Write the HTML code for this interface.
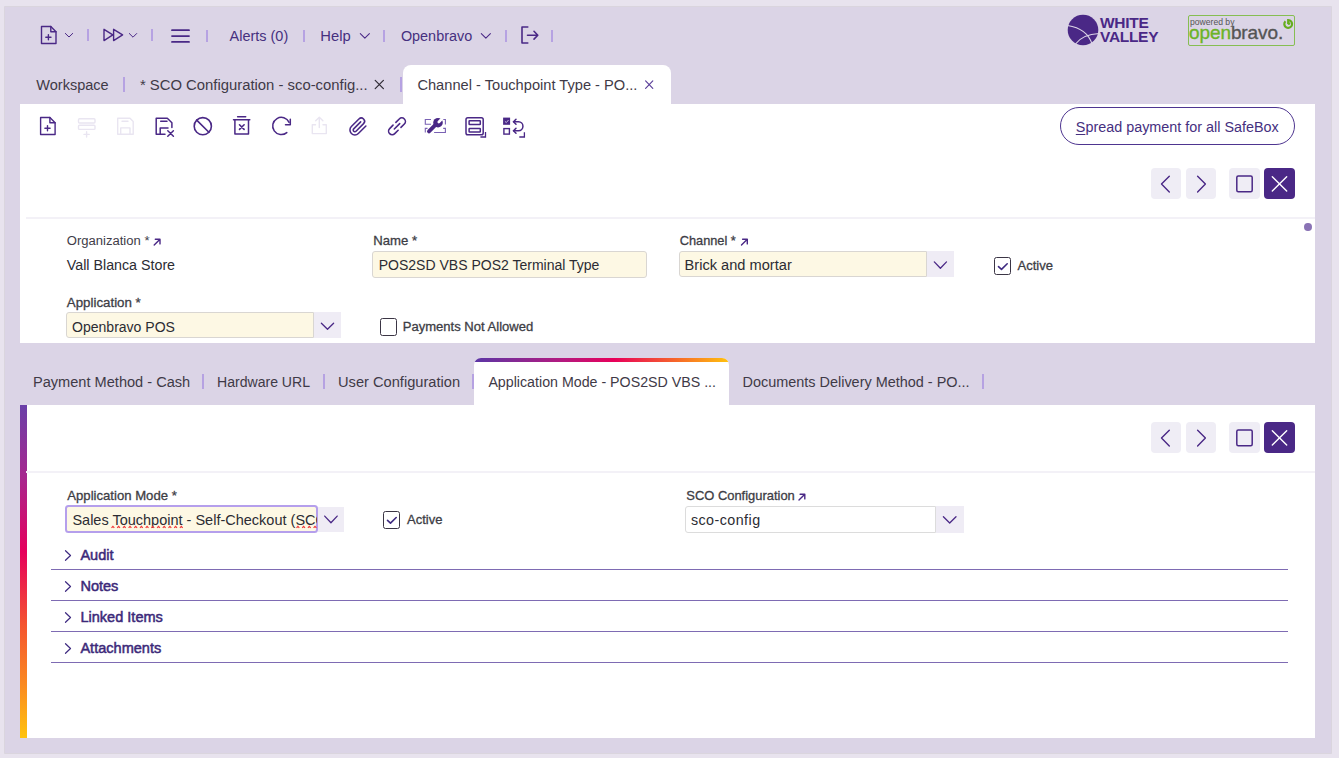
<!DOCTYPE html>
<html><head><meta charset="utf-8">
<style>
*{box-sizing:border-box;margin:0;padding:0}
html,body{width:1339px;height:758px;overflow:hidden;background:#e8e3ee;font-family:"Liberation Sans",sans-serif;position:relative}
.a{position:absolute}
.t{position:absolute;white-space:nowrap;line-height:1}
#main{left:4.5px;top:7.3px;width:1326px;height:745.5px;background:#dbd4e6;box-shadow:0 0 0 .8px #d6d2da}
.nav{color:#46307f;font-size:14.4px}
.sep{position:absolute;width:2.2px;height:11.6px;background:#b6a2e2}
.tab{color:#3f3a47;font-size:14.5px}
.tsep{position:absolute;width:2.2px;height:15.3px;background:#b6a2e2}
#panel{left:20px;top:104px;width:1295px;height:634px;background:#fff}
.lbl{color:#3d3d45;font-size:12.9px;-webkit-text-stroke:.3px #3d3d45}
.val{color:#2c2c33;font-size:14.3px}
.inp{position:absolute;background:#fdf8e4;border:1px solid #d9d6d2;border-radius:3px}
.dd{position:absolute;background:#efecf5}
.nb{position:absolute;width:30.5px;height:30.7px;border-radius:4px;background:#efedf5}
.sec{color:#3c2979;font-size:14.5px;-webkit-text-stroke:.5px #3c2979}
.hl{position:absolute;left:51px;width:1237px;height:1.5px;background:#7e6bb3}
#ov{position:absolute;left:0;top:0;overflow:visible}
</style></head><body>
<div id="main" class="a"></div>
<div class="sep" style="left:87.3px;top:29.2px;height:11.6px"></div>
<div class="sep" style="left:151.3px;top:29.2px;height:11.6px"></div>
<div class="sep" style="left:206px;top:30px;height:11.7px"></div>
<div class="sep" style="left:302.5px;top:30px;height:11.7px"></div>
<div class="sep" style="left:383.1px;top:30px;height:11.7px"></div>
<div class="sep" style="left:504.5px;top:30px;height:11.7px"></div>
<div class="sep" style="left:551px;top:30px;height:11.7px"></div>
<div class="t nav" style="left:229.6px;top:28.96px;font-size:14.46px;">Alerts (0)</div>
<div class="t nav" style="left:320.3px;top:28.71px;font-size:14.76px;">Help</div>
<div class="t nav" style="left:400.9px;top:28.99px;font-size:14.42px;">Openbravo</div>
<div class="t" style="left:1100px;top:16px;font-size:15.5px;font-weight:700;color:#4a2886;letter-spacing:-.3px;line-height:14px">WHITE<br>VALLEY</div>
<div class="a" style="left:1188.2px;top:15px;width:107.3px;height:30.8px;border:1.2px solid #86be52;border-radius:2px"></div>
<div class="t" style="left:1190px;top:17.6px;font-size:8.6px;color:#555">powered by</div>
<div class="t" style="left:1189px;top:23.4px;font-size:19px;color:#6cb327;letter-spacing:-.1px;-webkit-text-stroke:.35px #6cb327">open<span style="color:#555;-webkit-text-stroke:.35px #555">bravo.</span></div>
<div class="t tab" style="left:36.3px;top:77.81px;font-size:14.52px;">Workspace</div>
<div class="tsep" style="left:123px;top:77px"></div>
<div class="t tab" style="left:139.9px;top:77.53px;font-size:14.85px;">* SCO Configuration - sco-config...</div>
<div class="tsep" style="left:400px;top:77px"></div>
<div class="a" style="left:403px;top:65px;width:268px;height:40px;background:#fff;border-radius:8px 8px 0 0"></div>
<div class="t tab" style="left:417.4px;top:77.7px;font-size:14.65px;">Channel - Touchpoint Type - PO...</div>
<div id="panel" class="a"></div>
<div class="a" style="left:1060px;top:107px;width:235px;height:38px;border:1px solid #4e3590;border-radius:19px"></div>
<div class="t nav" style="left:1075.8px;top:119.83px;font-size:14.38px;"><u style="text-decoration-thickness:1px;text-underline-offset:2px">S</u>pread payment for all SafeBox</div>
<div class="nb" style="left:1150.8px;top:168.1px"></div>
<div class="nb" style="left:1185.8px;top:168.1px"></div>
<div class="nb" style="left:1229.3px;top:168.1px"></div>
<div class="nb" style="left:1264.3px;top:168.1px;background:#4a2886"></div>
<div class="nb" style="left:1150.8px;top:422px"></div>
<div class="nb" style="left:1185.8px;top:422px"></div>
<div class="nb" style="left:1229.3px;top:422px"></div>
<div class="nb" style="left:1264.3px;top:422px;background:#4a2886"></div>
<div class="a" style="left:26px;top:217px;width:1289px;height:2px;background:#f3f1f7"></div>
<div class="a" style="left:1304px;top:223px;width:7.5px;height:8px;border-radius:50%;background:#8a73b5"></div>
<div class="t lbl" style="left:66.8px;top:234.05px;font-size:13.05px;-webkit-text-stroke:0;color:#403c48">Organization *</div>
<div class="t val" style="left:66.8px;top:258.24px;font-size:14.25px;">Vall Blanca Store</div>
<div class="t lbl" style="left:66.8px;top:295.72px;font-size:13.32px;">Application *</div>
<div class="inp" style="left:66.3px;top:312.1px;width:247.4px;height:26.4px;border-radius:3px 0 0 3px"></div>
<div class="dd" style="left:313.7px;top:312.1px;width:27.2px;height:26.4px"></div>
<div class="t val" style="left:72.0px;top:320.12px;font-size:14.04px;">Openbravo POS</div>
<div class="t lbl" style="left:373.2px;top:233.87px;font-size:13.15px;">Name *</div>
<div class="inp" style="left:372.3px;top:251.2px;width:275.2px;height:26.5px"></div>
<div class="t val" style="left:378.7px;top:257.93px;font-size:14.02px;">POS2SD VBS POS2 Terminal Type</div>
<div class="a" style="left:380px;top:318px;width:17.4px;height:17.6px;border:1.8px solid #3b3545;border-radius:2.5px"></div>
<div class="t lbl" style="left:402.7px;top:319.95px;font-size:13.05px;">Payments Not Allowed</div>
<div class="t lbl" style="left:679.7px;top:235.37px;font-size:12.79px;">Channel *</div>
<div class="inp" style="left:679px;top:251.1px;width:247.7px;height:26.4px;border-radius:3px 0 0 3px"></div>
<div class="dd" style="left:926.7px;top:251.1px;width:27.4px;height:26.4px"></div>
<div class="t val" style="left:684.6px;top:257.63px;font-size:14.61px;">Brick and mortar</div>
<div class="a" style="left:994px;top:257px;width:17.4px;height:17.6px;border:1.8px solid #3b3545;border-radius:2.5px"></div>
<div class="t lbl" style="left:1017.5px;top:259.35px;font-size:13.05px;">Active</div>
<div class="a" style="left:20px;top:342.6px;width:1295px;height:62.4px;background:#dbd4e6"></div>
<div class="t tab" style="left:33.0px;top:375.05px;font-size:14.59px;">Payment Method - Cash</div>
<div class="tsep" style="left:202px;top:373.5px"></div>
<div class="t tab" style="left:217.0px;top:375.49px;font-size:14.07px;">Hardware URL</div>
<div class="tsep" style="left:323px;top:373.5px"></div>
<div class="t tab" style="left:338.0px;top:375.0px;font-size:14.65px;">User Configuration</div>
<div class="tsep" style="left:472px;top:373.5px"></div>
<div class="a" style="left:474px;top:358px;width:255px;height:47px;background:#fff;border-radius:7px 7px 0 0;overflow:hidden"><div style="height:3.5px;background:linear-gradient(90deg,#5b36a6 0%,#b5197f 35%,#e8005a 55%,#f76a28 80%,#ffc20e 100%)"></div></div>
<div class="t tab" style="left:488.4px;top:375.35px;font-size:14.23px;">Application Mode - POS2SD VBS ...</div>
<div class="t tab" style="left:742.5px;top:375.17px;font-size:14.45px;">Documents Delivery Method - PO...</div>
<div class="tsep" style="left:982px;top:373.5px"></div>
<div class="a" style="left:20px;top:405px;width:6.5px;height:333px;background:linear-gradient(180deg,#6a40a8 0%,#a8268e 22%,#e6005c 44%,#f4542f 66%,#fa8a22 84%,#ffc30d 100%)"></div>
<div class="a" style="left:26px;top:471px;width:1289px;height:2px;background:#f3f1f7"></div>
<div class="t lbl" style="left:67.3px;top:488.88px;font-size:13.14px;">Application Mode *</div>
<div class="inp" style="left:65.4px;top:505.4px;width:252.3px;height:27.6px;border:2px solid #b59fec;border-radius:3.5px"></div>
<div class="dd" style="left:317.7px;top:506.5px;width:26.5px;height:25.5px"></div>
<div class="a" style="left:67px;top:507px;width:249.5px;height:24.5px;overflow:hidden"><div class="t val" style="left:5.400000000000006px;top:5.529999999999973px;font-size:14.5px">Sales Touchpoint - Self-Checkout (SCO)</div></div>
<div class="a" style="left:383px;top:511px;width:17.4px;height:17.6px;border:1.8px solid #3b3545;border-radius:2.5px"></div>
<div class="t lbl" style="left:407.0px;top:513.48px;font-size:13.02px;">Active</div>
<div class="t lbl" style="left:686.3px;top:490.35px;font-size:12.93px;">SCO Configuration</div>
<div class="inp" style="left:685px;top:505.8px;width:251px;height:26.8px;background:#fff;border-color:#dcdcdc;border-radius:3px 0 0 3px"></div>
<div class="dd" style="left:936px;top:505.8px;width:27.5px;height:26.8px"></div>
<div class="t val" style="left:690.9px;top:513.1px;font-size:14.3px;letter-spacing:.45px">sco-config</div>
<div class="t sec" style="left:80.4px;top:547.73px;font-size:14.55px">Audit</div>
<div class="hl" style="top:568.5px"></div>
<div class="t sec" style="left:80.4px;top:578.73px;font-size:14.55px">Notes</div>
<div class="hl" style="top:599.5px"></div>
<div class="t sec" style="left:80.4px;top:609.73px;font-size:14.55px">Linked Items</div>
<div class="hl" style="top:630.5px"></div>
<div class="t sec" style="left:80.4px;top:640.73px;font-size:14.55px">Attachments</div>
<div class="hl" style="top:661.5px"></div>
<svg id="ov" width="1339" height="758" viewBox="0 0 1339 758"><g transform="translate(0 0)" fill="none" stroke="#4a2886" stroke-width="1.4" stroke-linejoin="round" stroke-linecap="round" ><path d="M41.5 26.5H50.8L56 31.7V43.5H41.5Z"/><path d="M50.8 26.5V31.7H56"/><path d="M48.4 34.6V39.8M45.8 37.2H51" stroke-width="1.4"/></g><path d="M65.3 33.4L69 37L72.7 33.4" fill="none" stroke="#4a2886" stroke-width="1" stroke-linejoin="round" stroke-linecap="round" /><path d="M104 29.3V40.6L112.8 34.95Z M113.6 29.3V40.6L122.6 34.95Z" fill="none" stroke="#4a2886" stroke-width="1.4" stroke-linejoin="round" stroke-linecap="round" /><path d="M129.3 33.5L133 37.2L136.7 33.5" fill="none" stroke="#4a2886" stroke-width="1" stroke-linejoin="round" stroke-linecap="round" /><path d="M172 30.15H189M172 36.1H189M172 41.9H189" fill="none" stroke="#4a2886" stroke-width="1.8" stroke-linejoin="round" stroke-linecap="round" stroke-linecap="butt"/><path d="M360.3 33.6L364.85 38.2L369.4 33.6" fill="none" stroke="#4a2886" stroke-width="1.05" stroke-linejoin="round" stroke-linecap="round" /><path d="M481.3 33.6L485.85 38.2L490.4 33.6" fill="none" stroke="#4a2886" stroke-width="1.05" stroke-linejoin="round" stroke-linecap="round" /><path d="M527.8 27H522V43H527.8M527.5 35.2H537.8M534 31.3L537.8 35.2L534 39.1" fill="none" stroke="#4a2886" stroke-width="1.6" stroke-linejoin="round" stroke-linecap="round" /><circle cx="1083" cy="30" r="15.3" fill="#4a2886"/><path d="M1067.5 25.5C1077 27 1088 31 1092 44M1075.5 44C1080 38 1088 34 1099 33.5" fill="none" stroke="#dbd4e6" stroke-width="1.2"/><path d="M1285.44 21.24A3.9 3.9 0 1 0 1288.2 20.1V24" fill="none" stroke="#66ad1e" stroke-width="2.2"/><circle cx="1288.9" cy="23.6" r="1.4" fill="#66ad1e"/><path d="M375.2 80.4L383.4 88.6M383.4 80.4L375.2 88.6" fill="none" stroke="#2e2a33" stroke-width="1.2" stroke-linejoin="round" stroke-linecap="round" /><path d="M645.6 80.8L652.8 88.3M652.8 80.8L645.6 88.3" fill="none" stroke="#5a3e99" stroke-width="1.15" stroke-linejoin="round" stroke-linecap="round" /><g transform="translate(-0.9 91)" fill="none" stroke="#4a2886" stroke-width="1.4" stroke-linejoin="round" stroke-linecap="round" ><path d="M41.5 26.5H50.8L56 31.7V43.5H41.5Z"/><path d="M50.8 26.5V31.7H56"/><path d="M48.4 34.6V39.8M45.8 37.2H51" stroke-width="1.4"/></g><g fill="none" stroke="#e9e5f1" stroke-width="1.4" stroke-linejoin="round" stroke-linecap="round" ><rect x="78.5" y="118.7" width="16.5" height="4.3" rx="1"/><rect x="78.5" y="125.3" width="16.5" height="4.1" rx="1"/><path d="M86.6 131.8V137M84 134.4H89.2"/></g><g fill="none" stroke="#e9e5f1" stroke-width="1.4" stroke-linejoin="round" stroke-linecap="round" ><path d="M117.7 118.3H130L133.2 121.5V134.2H117.7Z"/><path d="M122 121.2H128M120.7 134.2V127.9H130V134.2"/></g><g fill="none" stroke="#4a2886" stroke-width="1.5" stroke-linejoin="round" stroke-linecap="round" ><path d="M165 134.2H156.2V118.2H167.3L171.9 122.8V127.5"/><path d="M160.7 121.3H167M160.2 134.2V127.9H168"/><path d="M167.8 130.8L173.4 136.3M173.4 130.8L167.8 136.3"/></g><g fill="none" stroke="#4a2886" stroke-width="1.6" stroke-linejoin="round" stroke-linecap="round" ><circle cx="202.8" cy="126.2" r="8.6"/><path d="M196.7 120.1L208.9 132.3"/></g><g fill="none" stroke="#4a2886" stroke-width="1.5" stroke-linejoin="round" stroke-linecap="round" ><path d="M237.6 116.7H245.7M233.5 119.8H249.8"/><path d="M234.9 119.8V134H248.5V119.8"/><path d="M239.5 124.8L244.1 129.4M244.1 124.8L239.5 129.4" stroke-width="1.6"/></g><g fill="none" stroke="#4a2886" stroke-width="1.5" stroke-linejoin="round" stroke-linecap="round" ><path d="M289.1 122.4A8.6 8.6 0 1 0 286.8 132.6"/><path d="M290.3 119.2V124.8H285.5"/></g><g fill="none" stroke="#e9e5f1" stroke-width="1.4" stroke-linejoin="round" stroke-linecap="round" ><path d="M315.5 124.8H312.3V133.6H326.3V124.8H323"/><path d="M319.3 117.3V127.5M315.7 120.8L319.3 117.2L322.9 120.8"/></g><g transform="translate(348.3 116.9) scale(0.82)" fill="none" stroke="#4a2886" stroke-width="1.9" stroke-linejoin="round" stroke-linecap="round" ><path d="M21.44 11.05l-9.19 9.19a6 6 0 0 1-8.49-8.49l9.19-9.19a4 4 0 0 1 5.66 5.66l-9.2 9.19a2 2 0 0 1-2.83-2.83l8.49-8.48"/></g><g transform="translate(397 126.3) rotate(45)" fill="none" stroke="#4a2886" stroke-width="1.6" stroke-linejoin="round" stroke-linecap="round" ><path d="M-3.6 -2V-6.8A3.6 3.6 0 0 1 3.6 -6.8V-2"/><path d="M-3.6 2V6.8A3.6 3.6 0 0 0 3.6 6.8V2"/><path d="M0 -3.8V3.8"/></g><g fill="none" stroke="#7a62b4" stroke-width="1.1"><path d="M431 119.5H425.3V124.3H431M441.4 119.5H445.4V124.5M427.5 128.4H425.3V132.5M434.1 132.5H445.4V128.4H443.2"/></g><path d="M429 131.4L435.2 125.2" stroke="#4a2886" stroke-width="3.9" stroke-linecap="round"/><circle cx="438" cy="122.7" r="4.8" fill="#4a2886"/><path d="M438.8 122L443.6 117.2" stroke="#fff" stroke-width="2.7" stroke-linecap="round"/><g fill="none" stroke="#4a2886" stroke-width="1.5" stroke-linejoin="round" stroke-linecap="round" ><rect x="466" y="117.8" width="17.2" height="17" rx="1.8"/><rect x="469.1" y="120.8" width="11.2" height="3.6" rx=".5"/><rect x="469.1" y="128.5" width="11.2" height="3.6" rx=".5"/></g><path d="M485.5 132V137H480.4" fill="none" stroke="#4a2886" stroke-width="1.3"/><rect x="503.1" y="117.6" width="7" height="7.2" fill="#4a2886"/><path d="M504.9 121.3L506.3 122.6L508.5 120" fill="none" stroke="#c9bfe0" stroke-width="1"/><rect x="503.9" y="128.6" width="5.5" height="5.5" fill="none" stroke="#4a2886" stroke-width="1.4"/><g fill="none" stroke="#4a2886" stroke-width="1.5" stroke-linejoin="round" stroke-linecap="round" ><path d="M513.5 121.8H518.5A4.45 4.45 0 0 1 518.5 130.7H513.5"/><path d="M516 119.3L513.5 121.8L516 124.3M516 128.2L513.5 130.7L516 133.2"/></g><path d="M524.4 132.3V137H519.3" fill="none" stroke="#4a2886" stroke-width="1.3"/><g transform="translate(0 0)"><path d="M1169.3 176.3L1161.5 184.1L1169.3 191.9M1197.6 176.3L1205.4 184.1L1197.6 191.9" fill="none" stroke="#4a2886" stroke-width="1.4" stroke-linejoin="round" stroke-linecap="round" /><rect x="1236.8" y="176" width="15.4" height="15.8" rx="1.5" fill="none" stroke="#4a2886" stroke-width="1.5" stroke-linejoin="round" stroke-linecap="round" /><path d="M1272.3 176.7L1286.7 191M1286.7 176.7L1272.3 191" fill="none" stroke="#fff" stroke-width="1.4" stroke-linejoin="round" stroke-linecap="round" /></g><g transform="translate(0 254)"><path d="M1169.3 176.3L1161.5 184.1L1169.3 191.9M1197.6 176.3L1205.4 184.1L1197.6 191.9" fill="none" stroke="#4a2886" stroke-width="1.4" stroke-linejoin="round" stroke-linecap="round" /><rect x="1236.8" y="176" width="15.4" height="15.8" rx="1.5" fill="none" stroke="#4a2886" stroke-width="1.5" stroke-linejoin="round" stroke-linecap="round" /><path d="M1272.3 176.7L1286.7 191M1286.7 176.7L1272.3 191" fill="none" stroke="#fff" stroke-width="1.4" stroke-linejoin="round" stroke-linecap="round" /></g><path d="M154.2 245.0L160.0 239.2M155.3 239.2H160.0V243.9" fill="none" stroke="#4a2886" stroke-width="1.4" stroke-linejoin="round" stroke-linecap="round" /><path d="M741.5 245.0L747.3 239.2M742.5999999999999 239.2H747.3V243.9" fill="none" stroke="#4a2886" stroke-width="1.4" stroke-linejoin="round" stroke-linecap="round" /><path d="M799.0 500.0L804.8 494.2M800.0999999999999 494.2H804.8V498.9" fill="none" stroke="#4a2886" stroke-width="1.4" stroke-linejoin="round" stroke-linecap="round" /><path d="M321.4 323.2L327.5 329.2L333.6 323.2" fill="none" stroke="#4a2886" stroke-width="1.3" stroke-linejoin="round" stroke-linecap="round" /><path d="M934.3 261.9L940.4 268.2L946.5 261.9" fill="none" stroke="#4a2886" stroke-width="1.3" stroke-linejoin="round" stroke-linecap="round" /><path d="M324.7 516.1L330.95 522.8L337.2 516.1" fill="none" stroke="#4a2886" stroke-width="1.3" stroke-linejoin="round" stroke-linecap="round" /><path d="M943.4 516.7L949.7 523.0L956.0 516.7" fill="none" stroke="#4a2886" stroke-width="1.3" stroke-linejoin="round" stroke-linecap="round" /><path d="M998.5 266.6L1001.5 269.4L1007.2 263.8" fill="none" stroke="#3e2a80" stroke-width="1.6" stroke-linejoin="round" stroke-linecap="round" /><path d="M387.5 520.3L390.5 523.1L396.2 517.5" fill="none" stroke="#3e2a80" stroke-width="1.6" stroke-linejoin="round" stroke-linecap="round" /><path d="M65.5 550.7L70.5 555.5L65.5 560.3000000000001" fill="none" stroke="#3e2a80" stroke-width="1.2" stroke-linejoin="round" stroke-linecap="round" /><path d="M65.5 581.7L70.5 586.5L65.5 591.3000000000001" fill="none" stroke="#3e2a80" stroke-width="1.2" stroke-linejoin="round" stroke-linecap="round" /><path d="M65.5 612.7L70.5 617.5L65.5 622.3000000000001" fill="none" stroke="#3e2a80" stroke-width="1.2" stroke-linejoin="round" stroke-linecap="round" /><path d="M65.5 643.7L70.5 648.5L65.5 653.3000000000001" fill="none" stroke="#3e2a80" stroke-width="1.2" stroke-linejoin="round" stroke-linecap="round" /><path d="M111.5 527.8L112.9 526.4L114.3 527.8M117.2 527.8L118.60000000000001 526.4L120.0 527.8M122.9 527.8L124.30000000000001 526.4L125.7 527.8M128.6 527.8L130.0 526.4L131.4 527.8M134.29999999999998 527.8L135.7 526.4L137.1 527.8M139.99999999999997 527.8L141.39999999999998 526.4L142.79999999999998 527.8M145.69999999999996 527.8L147.09999999999997 526.4L148.49999999999997 527.8M151.39999999999995 527.8L152.79999999999995 526.4L154.19999999999996 527.8M157.09999999999994 527.8L158.49999999999994 526.4L159.89999999999995 527.8M162.79999999999993 527.8L164.19999999999993 526.4L165.59999999999994 527.8M168.49999999999991 527.8L169.89999999999992 526.4L171.29999999999993 527.8M174.1999999999999 527.8L175.5999999999999 526.4L176.99999999999991 527.8M179.8999999999999 527.8L181.2999999999999 526.4L182.6999999999999 527.8M185.59999999999988 527.8" fill="none" stroke="#f03a3a" stroke-width="1.2"/><path d="M296.5 527.8L297.9 526.4L299.3 527.8M302.2 527.8L303.59999999999997 526.4L305.0 527.8M307.9 527.8L309.29999999999995 526.4L310.7 527.8M313.59999999999997 527.8L314.99999999999994 526.4L316.4 527.8M319.29999999999995 527.8" fill="none" stroke="#f03a3a" stroke-width="1.2"/></svg>
</body></html>
